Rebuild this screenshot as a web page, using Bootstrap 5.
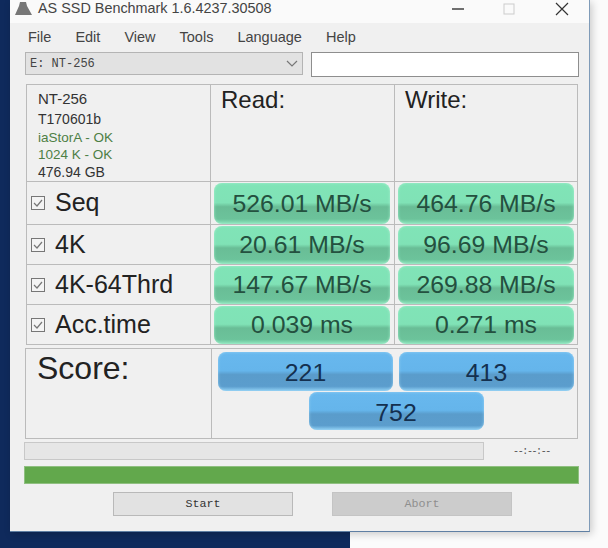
<!DOCTYPE html>
<html lang="en">

<head>
  <meta charset="UTF-8">
  <meta name="viewport" content="width=device-width, initial-scale=1.0">
  <title>AS SSD Benchmark</title>
  <link href="https://cdn.jsdelivr.net/npm/bootstrap@5.3.0/dist/css/bootstrap.min.css" rel="stylesheet">
  <style>
    body {
      background: linear-gradient(90deg, #0f2a5c 350px, #fbfbfb 350px);
      height: 548px;
      overflow: hidden;
      font-family: "Liberation Sans", Arial, sans-serif;
      color: #222;
    }

    .app-window {
      width: 580px;
      height: 532px;
      margin-left: 10px;
      background: #f0f0f0;
      border-right: 1px solid #7f9bb8;
      border-bottom: 1px solid #5f7fa3;
      box-shadow: 2px 2px 8px rgba(0, 0, 0, .2);
    }

    .title-bar {
      height: 23px;
      padding-bottom: 6px;
      background: #fafafa;
      font-size: 14.4px;
      color: #444;
    }

    .title-btn {
      width: 16px;
      height: 16px;
    }

    .app-icon {
      margin: 0 5px 0 4px;
    }

    .menu-row {
      height: 29px;
      padding-left: 18px;
      gap: 24px;
      font-size: 14.5px;
      color: #444;
    }

    .drive-row {
      height: 25px;
      padding: 0 10px 0 15px;
      gap: 8px;
    }

    .drive-select {
      width: 278px;
      height: 23px;
      background: #e2e2e2;
      border: 1px solid #b4b4b4;
      font: 12px "Liberation Mono", monospace;
      color: #444;
    }

    .drive-input {
      width: 269px;
      height: 25px;
      background: #fff;
      border: 1px solid #8e8e8e;
    }

    .result-table {
      width: 552px;
      margin: 7px 0 0 16px;
      display: grid;
      grid-template-columns: 184px 184px 182px;
      grid-template-rows: 97px 43px 40px 40px 39px;
      border: 1px solid #bbb;
    }

    .result-table > div {
      border-right: 1px solid #bbb;
      border-bottom: 1px solid #bbb;
    }

    .result-table > div:nth-child(3n) {
      border-right: 0;
    }

    .result-table > div:nth-last-child(-n+3) {
      border-bottom: 0;
    }

    .drive-info {
      padding: 2px 0 0 11px;
      font-size: 14px;
      line-height: 17.5px;
      color: #333;
    }

    .drive-info .first-line {
      font-size: 15px;
      line-height: 24px;
    }

    .ok-line {
      color: #4d7f45;
      font-size: 13.5px;
    }

    .col-title {
      padding-left: 10px;
      font-size: 24px;
      line-height: 30px;
    }

    .row-label {
      padding-left: 4px;
      gap: 10px;
      font-size: 25px;
    }

    .check-box {
      width: 14px;
      height: 14px;
      flex: none;
    }

    .value-cell {
      padding: 1px 4px 0 3px;
    }

    .result-table > .value-cell:nth-child(3n) {
      padding-right: 3px;
    }

    .value-bar {
      height: 100%;
      border-radius: 8px;
      font-size: 24.8px;
      color: #24503f;
    }

    .bar-green {
      background: linear-gradient(180deg, #80e4b7 0, #80e2b6 48%, #69bd96 58%, #6cc39b 88%, #8de6bd 100%);
      box-shadow: inset 0 0 3px rgba(170, 242, 210, .9);
    }

    .bar-blue {
      background: linear-gradient(180deg, #68b8ee 0, #65b5eb 48%, #5a9ccb 58%, #5b9dcd 88%, #8ccdf2 100%);
      box-shadow: inset 0 0 3px rgba(160, 215, 245, .9);
      color: #14304f;
      padding-top: 3px;
    }

    .score-table {
      width: 553px;
      height: 91px;
      margin: 3px 0 0 15px;
      display: grid;
      grid-template-columns: 186px 1fr;
      border: 1px solid #bbb;
    }

    .score-title {
      padding-left: 11px;
      border-right: 1px solid #bbb;
      font-size: 32px;
      line-height: 38px;
    }

    .score-values {
      padding: 3px 3px 0 6px;
      gap: 1px 6px;
      align-content: flex-start;
    }

    .score-values .value-bar {
      width: 175px;
      height: 38.5px;
    }

    .progress-row {
      height: 19px;
      margin: 2px 0 0 14px;
    }

    .empty-progress {
      width: 460px;
      height: 18px;
      background: #e6e6e6;
      border: 1px solid #c8c8c8;
    }

    .time-text {
      width: 95px;
      padding-top: 2px;
      font: 10px "Liberation Mono", monospace;
      letter-spacing: -1.4px;
      color: #555;
    }

    .full-progress {
      width: 555px;
      height: 18px;
      margin: 6px 0 0 14px;
      background: #62a84c;
      border: 1px solid #8fbf80;
    }

    .button-row {
      margin: 8px 0 0 103px;
      gap: 39px;
    }

    .app-btn {
      width: 180px;
      height: 24px;
      border: 1px solid #b9b9b9;
      border-radius: 0;
      padding: 0;
      background: #e2e2e2;
      color: #333;
      font: 11.7px "Liberation Mono", monospace;
    }

    .app-btn:disabled {
      background: #cccccc;
      border-color: #c4c4c4;
      color: #8f8f8f;
      opacity: 1;
    }
  </style>
</head>

<body class="m-0">

  <div class="app-window">
    <!-- Title bar -->
    <div class="title-bar d-flex align-items-center">
      <svg width="19" height="15" viewBox="0 0 19 15" class="app-icon flex-shrink-0">
        <path d="M6 1h6l1 4 5 9H1l4-9z" fill="#777" />
      </svg>
      <span>AS SSD Benchmark 1.6.4237.30508</span>
      <div class="ms-auto d-flex align-items-center">
        <svg class="title-btn" viewBox="0 0 16 16">
          <path d="M2 8h12" stroke="#333" stroke-width="1.4" />
        </svg>
        <svg class="title-btn" style="margin-left:35px" viewBox="0 0 16 16">
          <rect x="3" y="3" width="10" height="10" fill="none" stroke="#ccc" />
        </svg>
        <svg class="title-btn" style="margin:0 19px 0 37px" viewBox="0 0 16 16">
          <path d="M2 2l12 12M14 2L2 14" stroke="#333" stroke-width="1.2" />
        </svg>
      </div>
    </div>

    <!-- Menu -->
    <div class="menu-row d-flex align-items-center">
      <span>File</span><span>Edit</span><span>View</span><span>Tools</span><span>Language</span><span>Help</span>
    </div>

    <!-- Drive selection -->
    <div class="drive-row d-flex">
      <div class="drive-select d-flex align-items-center justify-content-between px-1">
        <span>E: NT-256</span>
        <svg width="12" height="8" viewBox="0 0 12 8">
          <path d="M1 1l5 5 5-5" fill="none" stroke="#777" stroke-width="1.2" />
        </svg>
      </div>
      <div class="drive-input"></div>
    </div>

    <!-- Results -->
    <div class="result-table">
      <div class="drive-info">
        <div class="first-line">NT-256</div>
        <div>T170601b</div>
        <div class="ok-line">iaStorA - OK</div>
        <div class="ok-line">1024 K - OK</div>
        <div>476.94 GB</div>
      </div>
      <div class="col-title">Read:</div>
      <div class="col-title">Write:</div>

      <div class="row-label d-flex align-items-center">
        <svg class="check-box" viewBox="0 0 14 14"><rect x=".5" y=".5" width="13" height="13" fill="#f4f4f4" stroke="#777" /><path d="M3 7l3 3 5-6" fill="none" stroke="#777" stroke-width="1.2" /></svg>
        <span>Seq</span>
      </div>
      <div class="value-cell"><div class="value-bar bar-green d-flex align-items-center justify-content-center">526.01 MB/s</div></div>
      <div class="value-cell"><div class="value-bar bar-green d-flex align-items-center justify-content-center">464.76 MB/s</div></div>

      <div class="row-label d-flex align-items-center">
        <svg class="check-box" viewBox="0 0 14 14"><rect x=".5" y=".5" width="13" height="13" fill="#f4f4f4" stroke="#777" /><path d="M3 7l3 3 5-6" fill="none" stroke="#777" stroke-width="1.2" /></svg>
        <span>4K</span>
      </div>
      <div class="value-cell"><div class="value-bar bar-green d-flex align-items-center justify-content-center">20.61 MB/s</div></div>
      <div class="value-cell"><div class="value-bar bar-green d-flex align-items-center justify-content-center">96.69 MB/s</div></div>

      <div class="row-label d-flex align-items-center">
        <svg class="check-box" viewBox="0 0 14 14"><rect x=".5" y=".5" width="13" height="13" fill="#f4f4f4" stroke="#777" /><path d="M3 7l3 3 5-6" fill="none" stroke="#777" stroke-width="1.2" /></svg>
        <span>4K-64Thrd</span>
      </div>
      <div class="value-cell"><div class="value-bar bar-green d-flex align-items-center justify-content-center">147.67 MB/s</div></div>
      <div class="value-cell"><div class="value-bar bar-green d-flex align-items-center justify-content-center">269.88 MB/s</div></div>

      <div class="row-label d-flex align-items-center">
        <svg class="check-box" viewBox="0 0 14 14"><rect x=".5" y=".5" width="13" height="13" fill="#f4f4f4" stroke="#777" /><path d="M3 7l3 3 5-6" fill="none" stroke="#777" stroke-width="1.2" /></svg>
        <span>Acc.time</span>
      </div>
      <div class="value-cell"><div class="value-bar bar-green d-flex align-items-center justify-content-center">0.039 ms</div></div>
      <div class="value-cell"><div class="value-bar bar-green d-flex align-items-center justify-content-center">0.271 ms</div></div>
    </div>

    <!-- Score -->
    <div class="score-table">
      <div class="score-title">Score:</div>
      <div class="score-values d-flex flex-wrap justify-content-center">
        <div class="value-bar bar-blue d-flex align-items-center justify-content-center">221</div>
        <div class="value-bar bar-blue d-flex align-items-center justify-content-center">413</div>
        <div class="value-bar bar-blue d-flex align-items-center justify-content-center">752</div>
      </div>
    </div>

    <!-- Progress -->
    <div class="progress-row d-flex align-items-center">
      <div class="empty-progress"></div>
      <div class="time-text text-center">--:--:--</div>
    </div>
    <div class="full-progress"></div>

    <!-- Buttons -->
    <div class="button-row d-flex">
      <button type="button" class="btn app-btn">Start</button>
      <button type="button" class="btn app-btn" disabled>Abort</button>
    </div>
  </div>

  <script src="https://cdn.jsdelivr.net/npm/bootstrap@5.3.0/dist/js/bootstrap.bundle.min.js"></script>
</body>

</html>
